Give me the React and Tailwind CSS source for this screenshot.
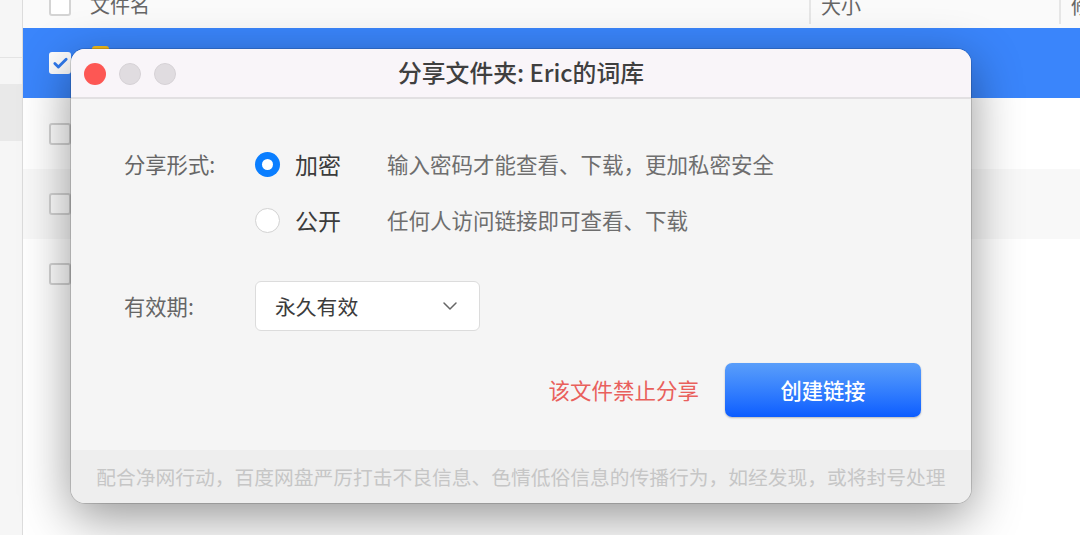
import React from 'react';
import { Check, ChevronDown } from 'lucide-react';

const font = { fontFamily: '"Noto Sans CJK SC", "Inter", sans-serif' };

const rows = [
  { id: 1, bg: 'bg-[#3a85fb]', checked: true },
  { id: 2, bg: 'bg-white', tall: true },
  { id: 3, bg: 'bg-[#f8f8f8]' },
  { id: 4, bg: 'bg-white' },
];

function Row({ row }) {
  return (
    <div className={`relative ${row.tall ? 'h-[71px]' : 'h-[70px]'} ${row.bg}`}>
      <div className="flex h-full items-center pl-[26px]">
        {row.checked ? (
          <div className="flex h-[22px] w-[22px] items-center justify-center rounded-[3px] bg-white">
            <Check className="h-[17px] w-[17px] text-[#2f7bf0]" strokeWidth={4} />
          </div>
        ) : (
          <div className="h-[22px] w-[22px] rounded-[3px] border-2 border-[#d4d4d4] bg-white" />
        )}
        {row.checked && <div className="mb-[18px] ml-[21px] h-4 w-[17px] rounded-[3px] bg-[#f4bd1c]" />}
      </div>
      <span className={`absolute right-[-4px] top-[23px] text-[18px] leading-6 ${row.checked ? 'text-white' : 'text-[#555555]'}`}>2</span>
    </div>
  );
}

function RadioRow({ checked, label, hint }) {
  return (
    <div className="flex h-[24px] items-center">
      {checked ? (
        <div className="flex h-[25px] w-[25px] items-center justify-center rounded-full bg-[#0a7eff]">
          <div className="h-[11px] w-[11px] rounded-full bg-white" />
        </div>
      ) : (
        <div className="h-[25px] w-[25px] rounded-full border border-[#d2d2d2] bg-white" />
      )}
      <span className="ml-[15px] w-[92px] text-[23px] leading-6 text-[#3c3c3c]">{label}</span>
      <span className="text-[21.5px] leading-6 text-[#6e6e6e]">{hint}</span>
    </div>
  );
}

export default function App() {
  return (
    <div className="relative flex h-[535px] w-[1080px] overflow-hidden bg-white" style={font}>
      {/* Sidebar */}
      <div className="w-[23px] shrink-0 border-r border-[#dcdcdc] bg-[#f6f6f6]">
        <div className="h-[58px] border-b border-[#e4e4e4]" />
        <div className="mt-[26px] h-[57px] bg-[#e9e9e9]" />
      </div>

      {/* File list */}
      <div className="flex-1">
        <div className="flex h-[28px] items-start bg-[#fafafa]">
          <div className="ml-[26px] mt-[-6px] h-[22px] w-[22px] shrink-0 rounded-[3px] border-2 border-[#d4d4d4] bg-white" />
          <span className="ml-[19px] mt-[-7px] w-[719px] shrink-0 text-[20px] leading-6 text-[#666666]">文件名</span>
          <span className="h-6 w-[250px] shrink-0 border-l-2 border-[#e6e6e6] pl-[10px] text-[20px] leading-[12px] text-[#666666]">大小</span>
          <span className="h-6 flex-1 overflow-hidden border-l-2 border-[#e6e6e6] pl-[10px] text-[20px] leading-[12px] text-[#666666]">修</span>
        </div>
        {rows.map((row) => (
          <Row key={row.id} row={row} />
        ))}
      </div>

      {/* Share dialog */}
      <div className="absolute left-[71px] top-[49px] flex h-[454px] w-[900px] flex-col overflow-hidden rounded-[14px] bg-[#f5f5f5] shadow-[0_0_0_1px_rgba(0,0,0,0.14),0_14px_50px_rgba(0,0,0,0.42)]">
        <div className="relative flex h-[50px] shrink-0 items-center justify-center border-b-2 border-[#e2e0e2] bg-[#f9f5f9] pb-[3px]">
          <div className="absolute left-[13px] top-[14px] flex gap-[13px]">
            <div className="h-[22px] w-[22px] rounded-full bg-[#fd5754]" />
            <div className="h-[22px] w-[22px] rounded-full border border-[#d5d1d5] bg-[#e0dce0]" />
            <div className="h-[22px] w-[22px] rounded-full border border-[#d5d1d5] bg-[#e0dce0]" />
          </div>
          <span className="text-[23.8px] font-medium leading-6 text-[#3f3f3f]">分享文件夹: Eric的词库</span>
        </div>

        <div className="flex flex-1 flex-col pl-[53px] pr-[50px] pt-[53px]">
          <div className="flex">
            <span className="w-[131px] text-[21.3px] leading-6 text-[#666666]">分享形式:</span>
            <div className="flex flex-col gap-[32px]">
              <RadioRow checked label="加密" hint="输入密码才能查看、下载，更加私密安全" />
              <RadioRow label="公开" hint="任何人访问链接即可查看、下载" />
            </div>
          </div>

          <div className="mt-[49px] flex items-center">
            <span className="w-[131px] text-[21.3px] leading-6 text-[#666666]">有效期:</span>
            <div className="flex h-[50px] w-[225px] items-center justify-between rounded-[6px] border border-[#dcdcdc] bg-white pl-[19px] pr-[17px]">
              <span className="text-[20.8px] leading-6 text-[#3c3c3c]">永久有效</span>
              <ChevronDown className="h-[24px] w-[24px] text-[#666666]" strokeWidth={1.5} />
            </div>
          </div>

          <div className="mt-[32px] flex items-center justify-end">
            <span className="mr-[26px] text-[21.5px] leading-6 text-[#e9605c]">该文件禁止分享</span>
            <button className="h-[54px] w-[196px] rounded-[7px] bg-gradient-to-b from-[#5a9efa] to-[#0b5cff] text-[21.3px] font-medium text-white shadow-[0_1px_2px_rgba(0,0,0,0.25)]">
              创建链接
            </button>
          </div>
        </div>

        <div className="flex h-[53px] shrink-0 items-center justify-center bg-[#eeeeee]">
          <span className="whitespace-nowrap text-[19.75px] leading-6 text-[#c6c6c6]">配合净网行动，百度网盘严厉打击不良信息、色情低俗信息的传播行为，如经发现，或将封号处理</span>
        </div>
      </div>
    </div>
  );
}
